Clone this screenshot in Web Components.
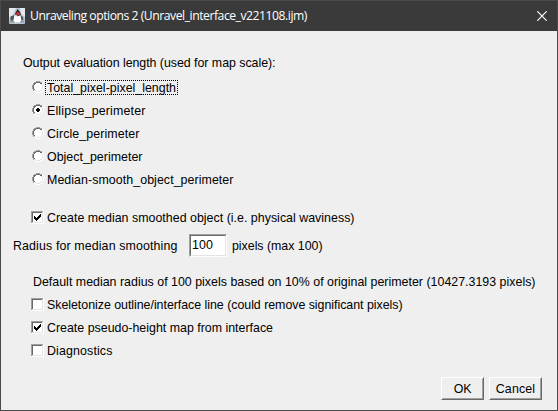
<!DOCTYPE html>
<html lang="en">
<head>
<meta charset="utf-8">
<title>Unraveling options 2</title>
<style>
html,body{margin:0;height:100%;overflow:hidden}
body{font:12.4px/23px "Liberation Sans",Arial,sans-serif;color:#000}
.output{margin-top:21px;padding-left:22px}
.group{display:flex;flex-direction:column;padding-left:30px}
.lengths{margin-top:1px}
.smooth{margin-top:15px}
.radius{display:flex;align-items:flex-start;height:23px;margin-top:5px;padding-left:12px}
.radius > fit-text{line-height:25px}
.radius > fit-text:first-child{width:176px}
.radius > fit-text:last-child{margin-left:5px}
.note{margin-top:13px;padding-left:32px;height:23px;line-height:25px}
.actions{display:flex;justify-content:flex-end;gap:5px;margin-top:15px;padding-right:15px}
</style>
</head>
<body>
<dialog-window>
  <fit-text slot="title" fit="277">Unraveling options 2 (Unravel_interface_v221108.ijm)</fit-text>
  <fit-text class="output" fit="252.5">Output evaluation length (used for map scale):</fit-text>
  <div class="group lengths">
    <choice-row kind="radio" focused><fit-text fit="129">Total_pixel-pixel_length</fit-text></choice-row>
    <choice-row kind="radio" checked><fit-text fit="98.5">Ellipse_perimeter</fit-text></choice-row>
    <choice-row kind="radio"><fit-text fit="92.5">Circle_perimeter</fit-text></choice-row>
    <choice-row kind="radio"><fit-text fit="95.5">Object_perimeter</fit-text></choice-row>
    <choice-row kind="radio"><fit-text fit="186.5">Median-smooth_object_perimeter</fit-text></choice-row>
  </div>
  <div class="group smooth">
    <choice-row kind="check" checked><fit-text fit="307.5">Create median smoothed object (i.e. physical waviness)</fit-text></choice-row>
  </div>
  <div class="radius">
    <fit-text fit="164.5">Radius for median smoothing</fit-text>
    <number-field><fit-text fit="21">100</fit-text></number-field>
    <fit-text fit="90.5">pixels (max 100)</fit-text>
  </div>
  <fit-text class="note" fit="502.5">Default median radius of 100 pixels based on 10% of original perimeter (10427.3193 pixels)</fit-text>
  <div class="group">
    <choice-row kind="check"><fit-text fit="355.5">Skeletonize outline/interface line (could remove significant pixels)</fit-text></choice-row>
    <choice-row kind="check" checked><fit-text fit="226">Create pseudo-height map from interface</fit-text></choice-row>
    <choice-row kind="check"><fit-text fit="65.5">Diagnostics</fit-text></choice-row>
  </div>
  <div class="actions">
    <push-button style="width:43px"><fit-text fit="17.5">OK</fit-text></push-button>
    <push-button style="width:53px"><fit-text fit="39.5">Cancel</fit-text></push-button>
  </div>
</dialog-window>
<script>
class Base extends HTMLElement{
  constructor(){super();this.attachShadow({mode:'open'});}
  connectedCallback(){this.shadowRoot.innerHTML=this.view();}
}
// Single line of text whose letter spacing is adjusted to a given advance width.
customElements.define('fit-text',class extends Base{
  view(){return `<style>:host{display:block;white-space:pre}span{display:inline-block;white-space:pre}</style><span><slot></slot></span>`;}
  connectedCallback(){
    super.connectedCallback();
    requestAnimationFrame(()=>this.adjust());
  }
  adjust(){
    const s=this.shadowRoot.querySelector('span'),n=this.textContent.length;
    s.style.letterSpacing='0';
    const w=s.getBoundingClientRect().width;
    s.style.letterSpacing=((+this.getAttribute('fit')-w)/n).toFixed(4)+'px';
  }
});
customElements.define('dialog-window',class extends Base{
  view(){return `<style>
  :host{display:flex;flex-direction:column;box-sizing:border-box;width:558px;height:411px;border:1px solid #4b4b4b;background:#efefef}
  header{flex:none;display:flex;align-items:center;height:30px;box-sizing:border-box;padding:0 10px 0 8px;background:#3a3a3a;color:#fff;font:12.2px/30px "Open Sans","Noto Sans",sans-serif}
  .title{margin-left:5px;flex:1}
  main{flex:1;display:flex;flex-direction:column}
  svg{display:block;flex:none}
  .close{margin-top:-1px}
  </style><header>
  <svg width="16" height="16" viewBox="0 0 16 16">
    <rect width="16" height="16" rx="1" fill="#b4c4d0"/><path fill="#e3e8ec" d="M0 0h7L4 7 0 10zM11 0h5v9l-4-3z"/>
    <path fill="#24282a" d="M8.6 1L5.6 6.4h1.6L9 8l3-.8-.7-2.6z"/>
    <path fill="#4c565c" d="M5.2 7L1.5 8.6v3.8l3 .4 1.4-3zM11.5 7l2.5 2 .4 3-2.6.8z"/>
    <path fill="#fff" d="M5.4 7.2l3 1.4 3-1 1 4.6-1.6 2.6-2.2-1-2.2 1-2-2z"/>
    <path fill="#8b979f" d="M1 13h4l1 1.4H1zM11.5 13H15v1.4h-4z"/>
    <ellipse cx="9" cy="5.7" rx="1.9" ry="1.6" fill="#e02b32"/>
  </svg>
  <div class="title"><slot name="title"></slot></div>
  <svg class="close" width="10" height="10" viewBox="0 0 10 10"><path d="M.3 .3l9.4 9.4M9.7 .3L.3 9.7" stroke="#fff" stroke-width="1.2"/></svg>
  </header><main><slot></slot></main>`;}
});
customElements.define('choice-row',class extends Base{
  view(){
    const on=this.hasAttribute('checked');
    const icon=this.getAttribute('kind')==='radio'
     ?`<svg class="radio" width="12" height="12" viewBox="0 0 12 12" shape-rendering="crispEdges">
       <path fill="#fff" d="M4 1h4v1h2v2h1v4h-1v2H8v1H4v-1H2V8H1V4h1V2h2z"/>
       <path fill="#a0a0a0" d="M4 0h4v1H4zM2 1h2v1H2zM8 1h2v1H8zM1 2h1v2H1zM0 4h1v4H0zM1 8h1v2H1z"/>
       <path fill="#696969" d="M4 1h4v1H4zM2 2h2v1H2zM8 2h2v1H8zM2 3h1v1H2zM1 4h1v4H1zM2 8h1v1H2z"/>
       <path fill="#e3e3e3" d="M9 3h1v1H9zM10 4h1v4h-1zM9 8h1v1H9zM8 9h2v1H8zM2 9h2v1H2zM4 10h4v1H4z"/>
       <path fill="#fff" d="M10 2h1v2h-1zM11 4h1v4h-1zM10 8h1v2h-1zM8 10h2v1H8zM2 10h2v1H2zM4 11h4v1H4z"/>
       ${on?'<path d="M5 4h2v1h1v2H7v1H5V7H4V5h1z"/>':''}</svg>`
     :`<svg width="13" height="13" viewBox="0 0 13 13" shape-rendering="crispEdges">
       <path fill="#fff" d="M0 0h13v13H0z"/><path fill="#a0a0a0" d="M0 0h12v1H1v11H0z"/>
       <path fill="#696969" d="M1 1h10v1H2v9H1z"/><path fill="#e3e3e3" d="M11 1h1v11H1v-1h10z"/>
       ${on?'<path d="M3 5h1v1h1v1h1V6h1V5h1V4h1V3h1v3H9v1H8v1H7v1H6v1H5V9H4V8H3z"/>':''}</svg>`;
    return `<style>:host{display:flex;align-items:flex-start;height:23px}
    svg{display:block;flex:none;margin:5px 3px 0 0}svg.radio{margin-left:1px}
    .label{position:relative;height:15px;line-height:15px;margin-top:5px}
    :host([focused]) .label::after{content:"";position:absolute;left:-2px;top:-1px;width:133px;height:15px;box-sizing:border-box;border:1px dotted #000}
    </style>${icon}<div class="label"><slot></slot></div>`;
  }
});
customElements.define('number-field',class extends Base{
  view(){return `<style>:host{display:block;box-sizing:border-box;width:38px;height:23px;border:1px solid;border-color:#a0a0a0 #fff #fff #a0a0a0}
  div{box-sizing:border-box;height:21px;border:1px solid;border-color:#696969 #e3e3e3 #e3e3e3 #696969;background:#fff;padding-left:1px;line-height:19px}</style><div><slot></slot></div>`;}
});
customElements.define('push-button',class extends Base{
  view(){return `<style>:host{display:block;box-sizing:border-box;height:23px;border:1px solid;border-color:#fff #696969 #696969 #fff}
  div{box-sizing:border-box;height:21px;border:1px solid;border-color:#efefef #a0a0a0 #a0a0a0 #efefef;display:flex;justify-content:center;line-height:21px}</style><div><slot></slot></div>`;}
});
</script>
</body>
</html>
